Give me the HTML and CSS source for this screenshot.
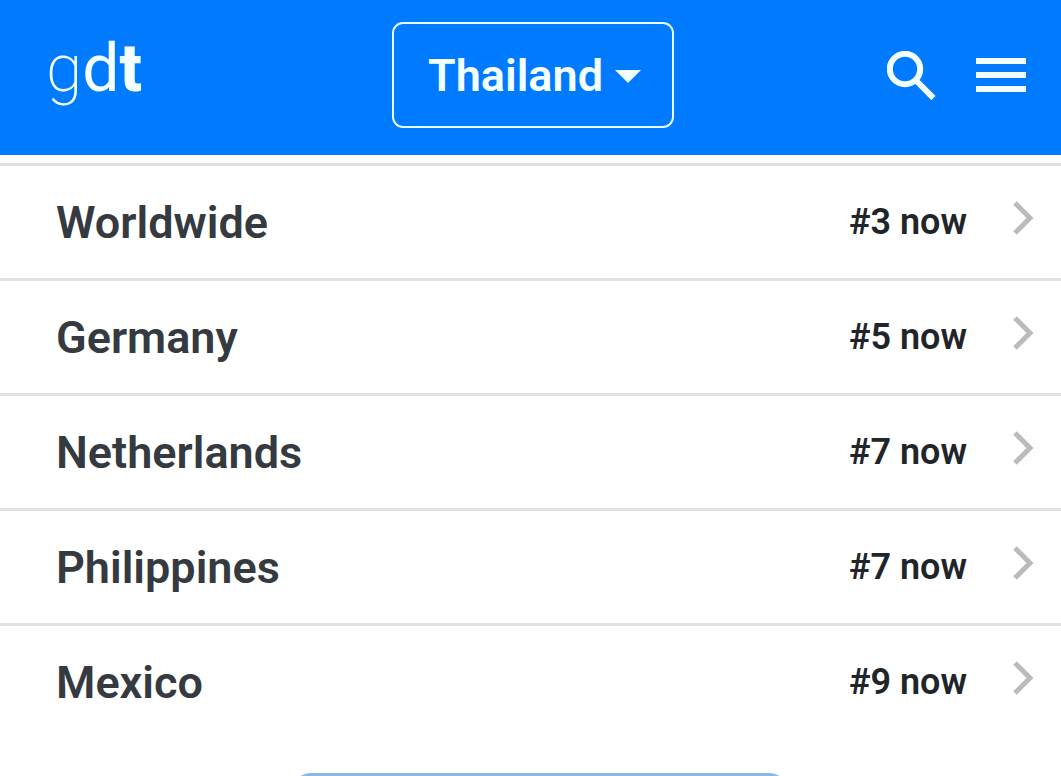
FILE: index.html
```html
<!DOCTYPE html>
<html lang="en">
<head>
<meta charset="utf-8">
<meta name="viewport" content="width=device-width, initial-scale=1">
<title>gdt – Thailand</title>
<link rel="stylesheet" href="styles.css">
</head>
<body>
<header class="topbar">
  <a class="logo" href="#"><span class="logo-g">g</span><span class="logo-d">d</span><span class="logo-t">t</span></a>
  <button class="country" type="button">Thailand<svg class="caret" viewBox="0 0 26 13" aria-hidden="true"><path d="M0 0h26L13 13z"/></svg></button>
  <nav class="actions">
    <button class="icon-button" type="button" aria-label="Search"><svg class="search-icon" viewBox="0 0 49 49" aria-hidden="true"><circle cx="18" cy="18" r="15.200"/><path d="M29 29.500L46.500 47"/></svg></button>
    <button class="icon-button" type="button" aria-label="Menu"><svg class="menu-icon" viewBox="0 0 50 34" aria-hidden="true"><path d="M0 0h50v6H0zM0 14h50v6H0zM0 28h50v6H0z"/></svg></button>
  </nav>
</header>
<main class="content">
  <ul class="ranks">
    <li><a class="rank" href="#"><span class="place">Worldwide</span><span class="position">#3 now</span><svg class="chevron" viewBox="0 0 21 34" aria-hidden="true"><path d="M2 2l15 15L2 32"/></svg></a></li>
    <li><a class="rank" href="#"><span class="place">Germany</span><span class="position">#5 now</span><svg class="chevron" viewBox="0 0 21 34" aria-hidden="true"><path d="M2 2l15 15L2 32"/></svg></a></li>
    <li><a class="rank" href="#"><span class="place">Netherlands</span><span class="position">#7 now</span><svg class="chevron" viewBox="0 0 21 34" aria-hidden="true"><path d="M2 2l15 15L2 32"/></svg></a></li>
    <li><a class="rank" href="#"><span class="place">Philippines</span><span class="position">#7 now</span><svg class="chevron" viewBox="0 0 21 34" aria-hidden="true"><path d="M2 2l15 15L2 32"/></svg></a></li>
    <li><a class="rank" href="#"><span class="place">Mexico</span><span class="position">#9 now</span><svg class="chevron" viewBox="0 0 21 34" aria-hidden="true"><path d="M2 2l15 15L2 32"/></svg></a></li>
  </ul>
  <div class="more-area"><div class="more"></div></div>
</main>
</body>
</html>
```

FILE: styles.css
```css
* { box-sizing: border-box; }
body {
  display: flex;
  flex-direction: column;
  margin: 0;
  height: 100vh;
  background: #fff;
  font-family: Roboto, "Liberation Sans", sans-serif;
}
.topbar {
  display: grid;
  grid-template-columns: 1fr auto 1fr;
  align-items: start;
  background: #007bff;
  color: #fff;
  padding: 22px 35px 27px 46px;
}
.logo {
  color: #f4ffff;
  text-decoration: none;
  font-size: 66px;
  line-height: 94px;
}
.logo-g { font-weight: 200; }
.logo-d { font-weight: 400; }
.logo-t { font-weight: 800; }
.country {
  display: flex;
  align-items: center;
  gap: 12px;
  height: 106px;
  margin-right: 6px;
  padding: 2px 31px 0 34px;
  border: 2px solid #e8fbff;
  border-radius: 11px;
  background: transparent;
  color: #f4ffff;
  font: 600 45px/52px Roboto, sans-serif;
}
.caret { width: 26px; height: 13px; fill: #f4ffff; }
.actions {
  display: flex;
  justify-content: flex-end;
  align-items: center;
  gap: 40px;
  height: 106px;
}
.icon-button {
  display: flex;
  padding: 0;
  border: 0;
  background: none;
}
.search-icon {
  width: 49px;
  height: 49px;
  fill: none;
  stroke: #f4ffff;
  stroke-width: 6;
}
.menu-icon { width: 50px; height: 34px; fill: #f4ffff; }
.content {
  display: flex;
  flex-direction: column;
  flex: 1;
  min-height: 0;
}
.ranks {
  flex: none;
  list-style: none;
  margin: 8px 0 0;
  padding: 0;
}
.rank {
  display: flex;
  align-items: center;
  height: 115px;
  padding: 0 27px 0 56px;
  border-top: 3px solid #dee2e6;
  color: #212529;
  text-decoration: none;
}
.place {
  flex: 1;
  color: #343a40;
  font-size: 45px;
  font-weight: 600;
}
.position { font-size: 36px; font-weight: 600; }
.chevron {
  width: 21px;
  height: 34px;
  margin: 0 0 8px 46px;
  fill: none;
  stroke: #bbb;
  stroke-width: 5;
}
.more-area {
  flex: 1;
  min-height: 0;
  margin-top: 35px;
  padding-left: 19px;
  overflow: hidden;
}
.more {
  width: 492px;
  height: 106px;
  margin: 0 auto;
  border: 3px solid #88b9ec;
  border-radius: 16px;
}
```
